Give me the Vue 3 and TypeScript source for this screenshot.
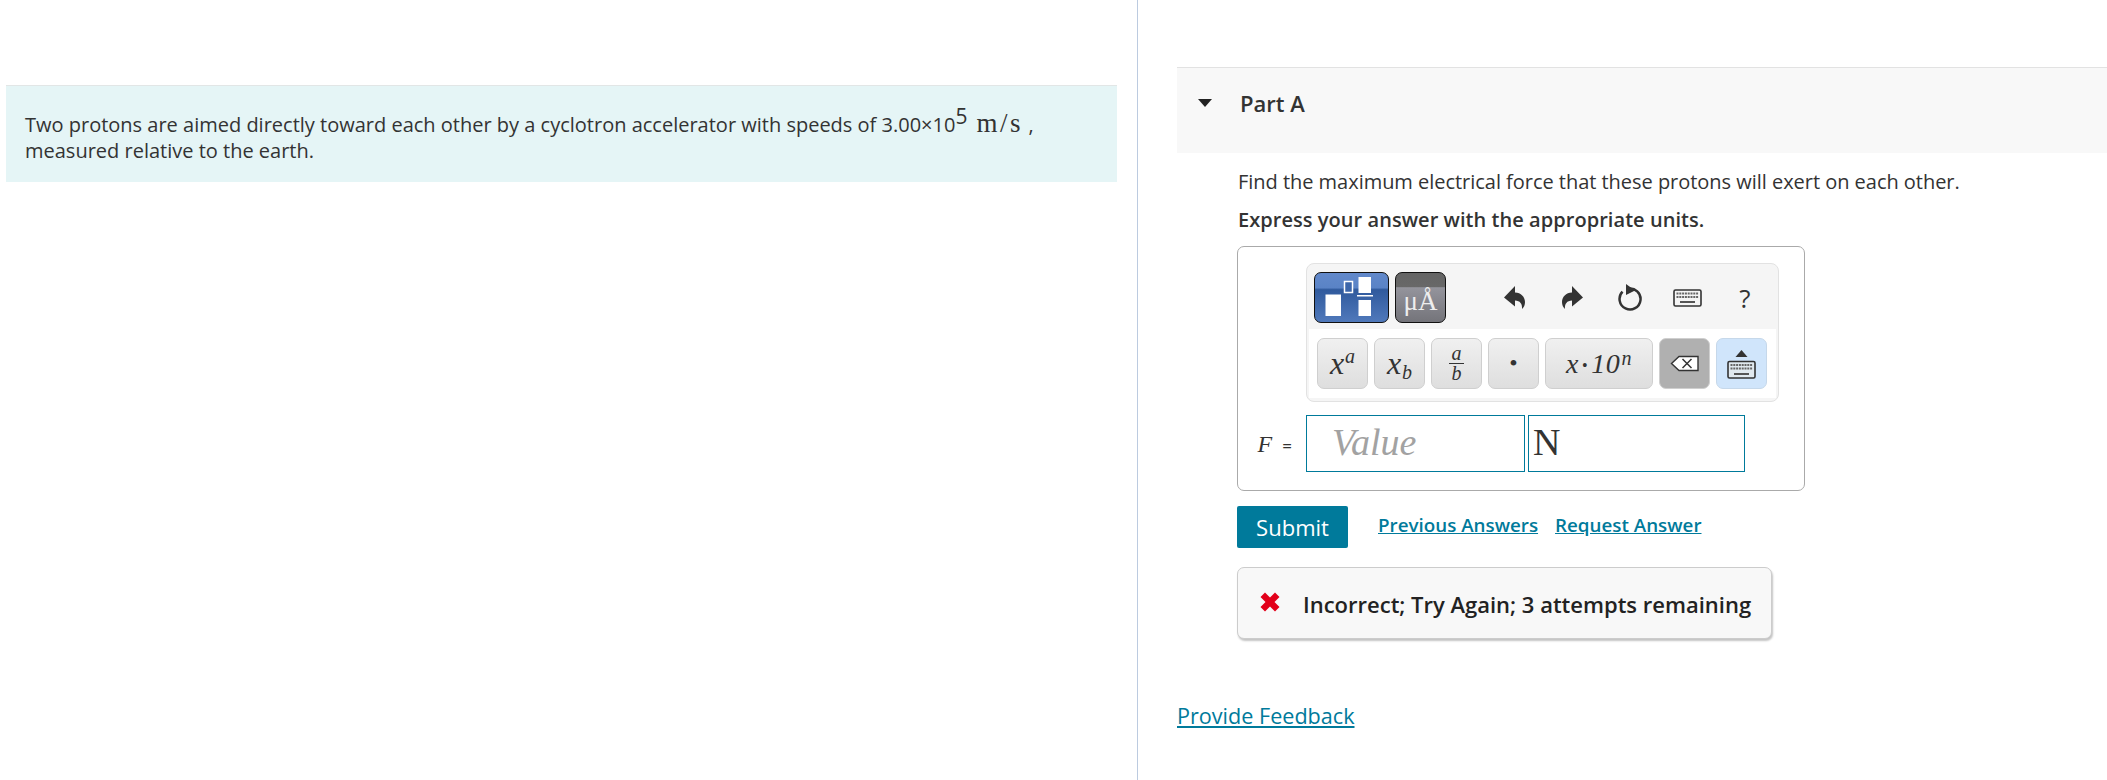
<script setup lang="ts">
const keys = [0, 1, 2, 3, 4, 5, 6, 7];
</script>

<template>
  <div class="page">
    <section class="left">
      <div class="intro">
        <p>
          Two protons are aimed directly toward each other by a cyclotron accelerator with speeds of
          3.00×10<sup class="exp">5</sup>
          <span class="unit">m/s</span> ,<br />measured relative to the earth.
        </p>
      </div>
    </section>

    <section class="right">
      <header class="part-head">
        <span class="caret"></span>
        <h2>Part A</h2>
      </header>

      <div class="part-body">
        <p class="question">Find the maximum electrical force that these protons will exert on each other.</p>
        <p class="hint">Express your answer with the appropriate units.</p>

        <div class="answer">
          <div class="editor">
            <div class="tools">
              <button class="mode mode--tpl" aria-label="Templates">
                <svg width="73" height="49" viewBox="1 1 73 49">
                  <rect x="11.500" y="22.500" width="15.500" height="21.500" fill="#fff" />
                  <rect x="30.500" y="9.500" width="8" height="11" fill="#3c66aa" stroke="#fff" stroke-width="1.500" />
                  <rect x="44.500" y="5" width="12.500" height="16" fill="#fff" />
                  <rect x="43" y="23" width="16" height="1.500" fill="#fff" />
                  <rect x="44.500" y="28" width="12.500" height="16" fill="#fff" />
                </svg>
              </button>
              <button class="mode mode--units" aria-label="Units">
                <span>μÅ</span>
              </button>
              <div class="actions">
                <span class="act">
                  <svg width="21" height="23" viewBox="0 0 21 23">
                    <path d="M0 11.500 11 0V6.500C17 6.500 21 11 21 16 21 19 20 21 18 23 18.500 18 16 14.500 11 14.500V20.500Z" fill="#333" />
                  </svg>
                </span>
                <span class="act">
                  <svg width="21" height="23" viewBox="0 0 21 23">
                    <path d="M21 11.500 10 0V6.500C4 6.500 0 11 0 16 0 19 1 21 3 23 2.500 18 5 14.500 10 14.500V20.500Z" fill="#333" />
                  </svg>
                </span>
                <span class="act">
                  <svg width="24" height="27" viewBox="0 0 24 27">
                    <path d="M10 4.700A10.500 10.500 0 1 1 4.500 7.700" fill="none" stroke="#333" stroke-width="2.500" />
                    <path d="M8 0 17 6.500 8 11Z" fill="#333" />
                  </svg>
                </span>
                <span class="act">
                  <svg width="29" height="18" viewBox="0 0 29 18">
                    <rect x="1" y="1" width="27" height="16" rx="1.500" fill="#f5f5f5" stroke="#333" stroke-width="1.600" />
                    <rect v-for="k in keys" :key="k" :x="3.500 + k * 2.800" y="3.500" width="2" height="2" fill="#666" />
                    <rect v-for="k in keys" :key="'b' + k" :x="3.500 + k * 2.800" y="7" width="2" height="2" fill="#666" />
                    <rect x="7" y="12" width="15" height="2" fill="#555" />
                  </svg>
                </span>
                <span class="act help">?</span>
              </div>
            </div>
            <div class="keys">
              <button class="key"><span><i>x</i><sup>a</sup></span></button>
              <button class="key"><span><i>x</i><sub>b</sub></span></button>
              <button class="key frac"><i>a</i><b></b><i>b</i></button>
              <button class="key dot">•</button>
              <button class="key key--wide"><span><i>x</i><span class="mid">•</span><i>10</i><sup>n</sup></span></button>
              <button class="key key--del" aria-label="Delete">
                <svg width="29" height="17" viewBox="0 0 29 17">
                  <path d="M28 1.500H9L1.500 8.500 9 15.500H28Z" fill="#fff" stroke="#333" stroke-width="1.400" />
                  <path d="M12.500 4 21.500 13M21.500 4 12.500 13" stroke="#333" stroke-width="1.500" />
                </svg>
              </button>
              <button class="key key--kb" aria-label="Toggle keyboard">
                <svg width="29" height="30" viewBox="0 0 29 30">
                  <path d="M14.500 1 20.500 8H8.500Z" fill="#333" />
                  <rect x="1" y="12.500" width="27" height="16.500" rx="1.500" fill="#e0e8ee" stroke="#333" stroke-width="1.600" />
                  <rect v-for="k in keys" :key="k" :x="3.500 + k * 2.800" y="15" width="2" height="2" fill="#666" />
                  <rect v-for="k in keys" :key="'b' + k" :x="3.500 + k * 2.800" y="18.500" width="2" height="2" fill="#666" />
                  <rect x="7" y="24" width="15" height="2" fill="#555" />
                </svg>
              </button>
            </div>
          </div>

          <div class="fields">
            <span class="label"><i>F</i><span class="eq">=</span></span>
            <div class="field field--value">Value</div>
            <div class="field field--unit">N</div>
          </div>
        </div>

        <div class="submit-row">
          <button class="submit">Submit</button>
          <a class="link">Previous Answers</a>
          <a class="link">Request Answer</a>
        </div>

        <div class="feedback">
          <svg width="20" height="20" viewBox="0 0 20 20">
            <path d="M5 0.500 10 5.500 15 0.500 19.500 5 14.500 10 19.500 15 15 19.500 10 14.500 5 19.500 0.500 15 5.500 10 0.500 5Z" fill="#e2001a" />
          </svg>
          <strong>Incorrect; Try Again; 3 attempts remaining</strong>
        </div>
      </div>

      <a class="provide">Provide Feedback</a>
    </section>
  </div>
</template>

<style>
html,
body {
  background: #fff;
}
</style>

<style scoped>
.page {
  display: flex;
  height: 780px;
  overflow: hidden;
  font-family: "Open Sans", "Noto Sans", sans-serif;
  color: #333;
}

.left {
  box-sizing: border-box;
  width: 1138px;
  flex-shrink: 0;
  padding: 85px 20px 0 6px;
  border-right: 1px solid #bccbe0;
}

.intro {
  box-sizing: border-box;
  height: 97px;
  padding: 24px 19px 0;
  background: #e5f5f6;
  border-top: 1px solid #e2e6e6;
  font-size: 20px;
  line-height: 26px;
}

.intro p {
  margin: 0;
}

.exp {
  font-size: 21px;
  line-height: 0;
  vertical-align: 8px;
  margin-right: 9px;
}

.unit {
  font-family: "Liberation Serif", serif;
  font-size: 27px;
  letter-spacing: 2.600px;
}

.right {
  flex: 1;
  min-width: 0;
  padding: 67px 0 0 39px;
}

.part-head {
  box-sizing: border-box;
  display: flex;
  align-items: center;
  height: 86px;
  padding: 0 0 16px 21px;
  background: #f8f8f8;
  border-top: 1px solid #e2e2e2;
}

.caret {
  width: 0;
  height: 0;
  margin-right: 28px;
  border-left: 7.500px solid transparent;
  border-right: 7.500px solid transparent;
  border-top: 8px solid #222;
}

.part-head h2 {
  margin: 0;
  font-size: 22px;
  font-weight: 600;
  color: #333;
}

.part-body {
  padding-left: 60px;
}

.question {
  margin: 15px 0 0 1px;
  font-size: 20px;
  letter-spacing: -0.03px;
  line-height: 27px;
}

.hint {
  margin: 11px 0 0 1px;
  font-size: 20px;
  font-weight: 600;
  letter-spacing: 0.05px;
  line-height: 27px;
}

.answer {
  box-sizing: border-box;
  width: 568px;
  height: 245px;
  margin-top: 13px;
  padding: 16px 0 0 68px;
  border: 1px solid #aaa;
  border-radius: 7px;
}

.editor {
  box-sizing: border-box;
  width: 473px;
  height: 139px;
  background: #f5f5f5;
  border: 1px solid #e2e2e2;
  border-radius: 8px;
  padding-bottom: 3px;
}

.tools {
  display: flex;
  align-items: center;
  height: 65px;
  padding: 2px 0 0 7px;
  box-sizing: border-box;
}

.mode {
  box-sizing: border-box;
  height: 51px;
  padding: 0;
  border: 1px solid #111;
  border-radius: 7px;
  display: flex;
  align-items: center;
  justify-content: center;
}

.mode--tpl {
  width: 75px;
  background: linear-gradient(#6289cb 0, #5a83c6 30%, #305a9d 34%, #5079bb 100%);
}

.mode--units {
  width: 51px;
  margin-left: 6px;
  background: linear-gradient(#646464 0, #686868 28%, #94949c 30%, #74747a 100%);
  color: #eee;
  font-family: "Liberation Serif", serif;
  font-size: 27px;
}

.mode--units span {
  margin-top: 8px;
}

.actions {
  display: flex;
  align-items: center;
  margin-left: 40px;
}

.act {
  display: flex;
  align-items: center;
  justify-content: center;
  width: 57.500px;
}

.help {
  font-size: 26px;
  color: #333;
}

.keys {
  display: flex;
  gap: 6px;
  height: 69px;
  padding: 9px 0 0 8px;
  box-sizing: border-box;
  background: #fff;
  margin: 0 2px 0 2px;
}

.key {
  box-sizing: border-box;
  width: 51px;
  height: 51px;
  padding: 0;
  display: flex;
  align-items: center;
  justify-content: center;
  border: 1px solid #cfcfcf;
  border-radius: 7px;
  background: linear-gradient(#f0f0f0, #dedede);
  color: #333;
  font-family: "Liberation Serif", serif;
  font-size: 32px;
}

.key sup,
.key sub {
  margin-left: 1px;
  font-size: 20px;
  font-style: italic;
  line-height: 0;
}

.key sup {
  vertical-align: 11px;
}

.key sub {
  vertical-align: -5px;
}

.frac {
  flex-direction: column;
  font-size: 20px;
  line-height: 19px;
}

.frac b {
  display: block;
  width: 15px;
  height: 1px;
  background: #333;
}

.dot {
  font-size: 24px;
}

.key--wide {
  width: 108px;
  font-size: 28px;
  letter-spacing: 0.6px;
}

.key--wide sup {
  vertical-align: 8px;
}

.mid {
  font-size: 16px;
  margin: 0 3px;
  vertical-align: 2px;
}

.key--del {
  background: #b0b0b0;
}

.key--kb {
  background: #d0e5fb;
  border-color: #c6d8ea;
}

.fields {
  display: flex;
  align-items: stretch;
  height: 57px;
  margin-top: 13px;
  margin-left: -68px;
}

.label {
  box-sizing: border-box;
  width: 68px;
  padding-right: 14px;
  text-align: right;
  font-family: "Liberation Serif", serif;
  font-size: 24px;
  line-height: 59px;
}

.eq {
  margin-left: 10px;
  font-family: "Open Sans", sans-serif;
  font-size: 17px;
}

.field {
  box-sizing: border-box;
  border: 1px solid #007a9b;
  font-family: "Liberation Serif", serif;
  font-size: 38px;
  line-height: 53px;
}

.field--value {
  width: 219px;
  padding-left: 25px;
  color: #a2a2a2;
  font-style: italic;
}

.field--unit {
  width: 217px;
  margin-left: 3px;
  padding-left: 4px;
  color: #333;
}

.submit-row {
  display: flex;
  align-items: center;
  height: 42px;
  margin-top: 15px;
}

.submit {
  width: 111px;
  height: 42px;
  padding: 0;
  border: 0;
  border-radius: 2px;
  background: #007a9b;
  color: #fff;
  font-family: inherit;
  font-size: 22px;
}

.link {
  font-size: 18.800px;
  font-weight: 600;
  color: #007a9b;
  text-decoration: underline;
  margin-left: 17px;
  margin-top: -4px;
}

.submit + .link {
  margin-left: 30px;
}

.feedback {
  box-sizing: border-box;
  display: flex;
  align-items: center;
  gap: 23px;
  width: 535px;
  height: 72px;
  margin-top: 19px;
  padding: 2px 0 0 22px;
  background: #f8f8f8;
  border: 1px solid #ccc;
  border-radius: 7px;
  box-shadow: 1px 2px 2px #c4c4c4;
}

.feedback svg {
  flex-shrink: 0;
  margin-top: -5px;
}

.feedback strong {
  font-size: 22px;
  font-weight: 600;
  color: #222;
  white-space: nowrap;
}

.provide {
  display: inline-block;
  margin-top: 62px;
  font-size: 21.600px;
  color: #007a9b;
  text-decoration: underline;
}
</style>
